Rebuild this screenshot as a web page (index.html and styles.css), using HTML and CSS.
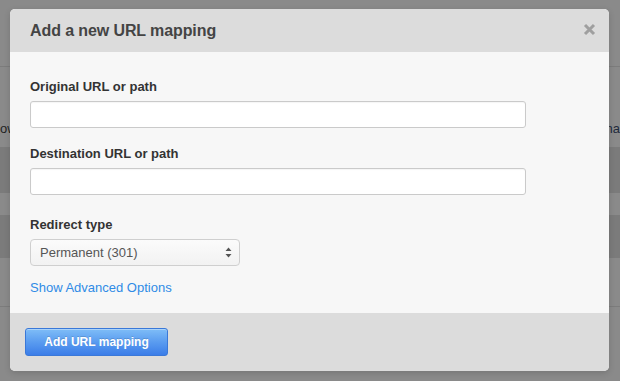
FILE: index.html
```html
<!DOCTYPE html>
<html>
<head>
<meta charset="utf-8">
<link rel="stylesheet" href="styles.css">
</head>
<body>
<div class="page">
  <div class="bg-top"></div>
  <div class="bg-row bg-text"><span class="bg-left">ow</span><span class="bg-right">na</span></div>
  <div class="bg-band"></div>
  <div class="bg-gap"></div>
  <div class="bg-band bg-band2"></div>
  <div class="bg-rest"></div>
</div>

<div class="modal">
  <div class="modal-header">
    <h2 class="modal-title">Add a new URL mapping</h2>
    <span class="close" aria-label="close">
      <svg width="13" height="13" viewBox="0 0 13 13"><path d="M2 2 L11 11 M11 2 L2 11" stroke="#9f9f9f" stroke-width="3" stroke-linecap="butt"/></svg>
    </span>
  </div>
  <div class="modal-body">
    <div class="field f1">
      <label class="label">Original URL or path</label>
      <div class="input input-wide"></div>
    </div>
    <div class="field f2">
      <label class="label">Destination URL or path</label>
      <div class="input input-wide"></div>
    </div>
    <div class="field f3">
      <label class="label">Redirect type</label>
      <div class="select">
        <span>Permanent (301)</span>
        <svg class="arrows" width="7" height="11" viewBox="0 0 7 11"><path d="M3.5 0.5 L6.5 4 L0.5 4 Z M0.5 7 L6.5 7 L3.5 10.5 Z" fill="#555"/></svg>
      </div>
    </div>
    <a class="adv-link">Show Advanced Options</a>
  </div>
  <div class="modal-footer">
    <button class="btn-primary">Add URL mapping</button>
  </div>
</div>
</body>
</html>
```

FILE: styles.css
```css
html, body {
  margin: 0;
  padding: 0;
}
body {
  width: 620px;
  height: 381px;
  overflow: hidden;
  position: relative;
  background: #8a8a8a;
  font-family: "Liberation Sans", Arial, sans-serif;
}

/* dimmed page underneath */
.page {
  display: flex;
  flex-direction: column;
  width: 620px;
}
.bg-top {
  height: 66px;
  border-bottom: 1px solid #7c7c7c;
}
.bg-row {
  height: 80px;
  display: flex;
  justify-content: space-between;
  align-items: flex-end;
}
.bg-text {
  font-size: 13px;
  line-height: 16px;
  color: #222;
  padding-bottom: 10px;
  box-sizing: border-box;
}
.bg-left {
  margin-left: 0;
}
.bg-right {
  margin-right: 0;
  color: #1f2b3d;
}
.bg-band {
  height: 46px;
  background: #7b7b7b;
}
.bg-gap {
  height: 22px;
}
.bg-band2 {
  height: 43px;
}
.bg-rest {
  height: 48px;
  border-bottom: 1px solid #7c7c7c;
}

/* modal */
.modal {
  position: absolute;
  top: 9px;
  left: 10px;
  width: 599px;
  height: 362px;
  border-radius: 5px;
  overflow: hidden;
  background: #f7f7f7;
  display: flex;
  flex-direction: column;
  box-shadow: 0 2px 6px rgba(0,0,0,0.15);
}
.modal-header {
  height: 43px;
  background: #dcdcdc;
  display: flex;
  align-items: center;
  justify-content: space-between;
  padding: 0 13px 0 20px;
  flex-shrink: 0;
}
.modal-title {
  margin: 0;
  font-size: 16px;
  font-weight: bold;
  color: #444;
  letter-spacing: -0.1px;
}
.close {
  display: flex;
  width: 13px;
  height: 13px;
  margin-top: -2px;
}

.modal-body {
  flex: 1;
  padding: 26px 20px 0 20px;
  background: #f7f7f7;
}
.field {
  display: flex;
  flex-direction: column;
  align-items: flex-start;
}
.f2 { margin-top: 17px; }
.f3 { margin-top: 21px; }
.label {
  font-size: 13px;
  line-height: 18px;
  font-weight: bold;
  color: #333;
  margin-bottom: 5px;
}
.input {
  height: 27px;
  box-sizing: border-box;
  background: #fff;
  border: 1px solid #cacaca;
  border-radius: 3px;
  box-shadow: inset 0 1px 1px rgba(0,0,0,0.04);
}
.input-wide {
  width: 496px;
}
.select {
  width: 210px;
  height: 27px;
  box-sizing: border-box;
  border: 1px solid #cfcfcf;
  border-radius: 4px;
  background: linear-gradient(#fbfbfb, #f2f2f2);
  display: flex;
  align-items: center;
  justify-content: space-between;
  padding: 0 7px 0 9px;
  font-size: 13px;
  color: #555;
}
.arrows {
  display: block;
}
.adv-link {
  display: block;
  margin-top: 13px;
  font-size: 13px;
  line-height: 18px;
  color: #2f8be6;
  cursor: pointer;
}

.modal-footer {
  height: 58px;
  flex-shrink: 0;
  background: #dcdcdc;
  box-sizing: border-box;
  padding: 15px 15px;
}
.btn-primary {
  width: 143px;
  height: 28px;
  border: 1px solid #3a78d8;
  border-radius: 3px;
  background: linear-gradient(#7fbdf7, #5a9cf0 50%, #3b7de8);
  color: #fff;
  font-family: "Liberation Sans", Arial, sans-serif;
  font-size: 12px;
  font-weight: bold;
  padding: 0;
  box-shadow: inset 0 1px 0 rgba(255,255,255,0.35);
  text-shadow: 0 -1px 0 rgba(0,0,0,0.15);
}
```
